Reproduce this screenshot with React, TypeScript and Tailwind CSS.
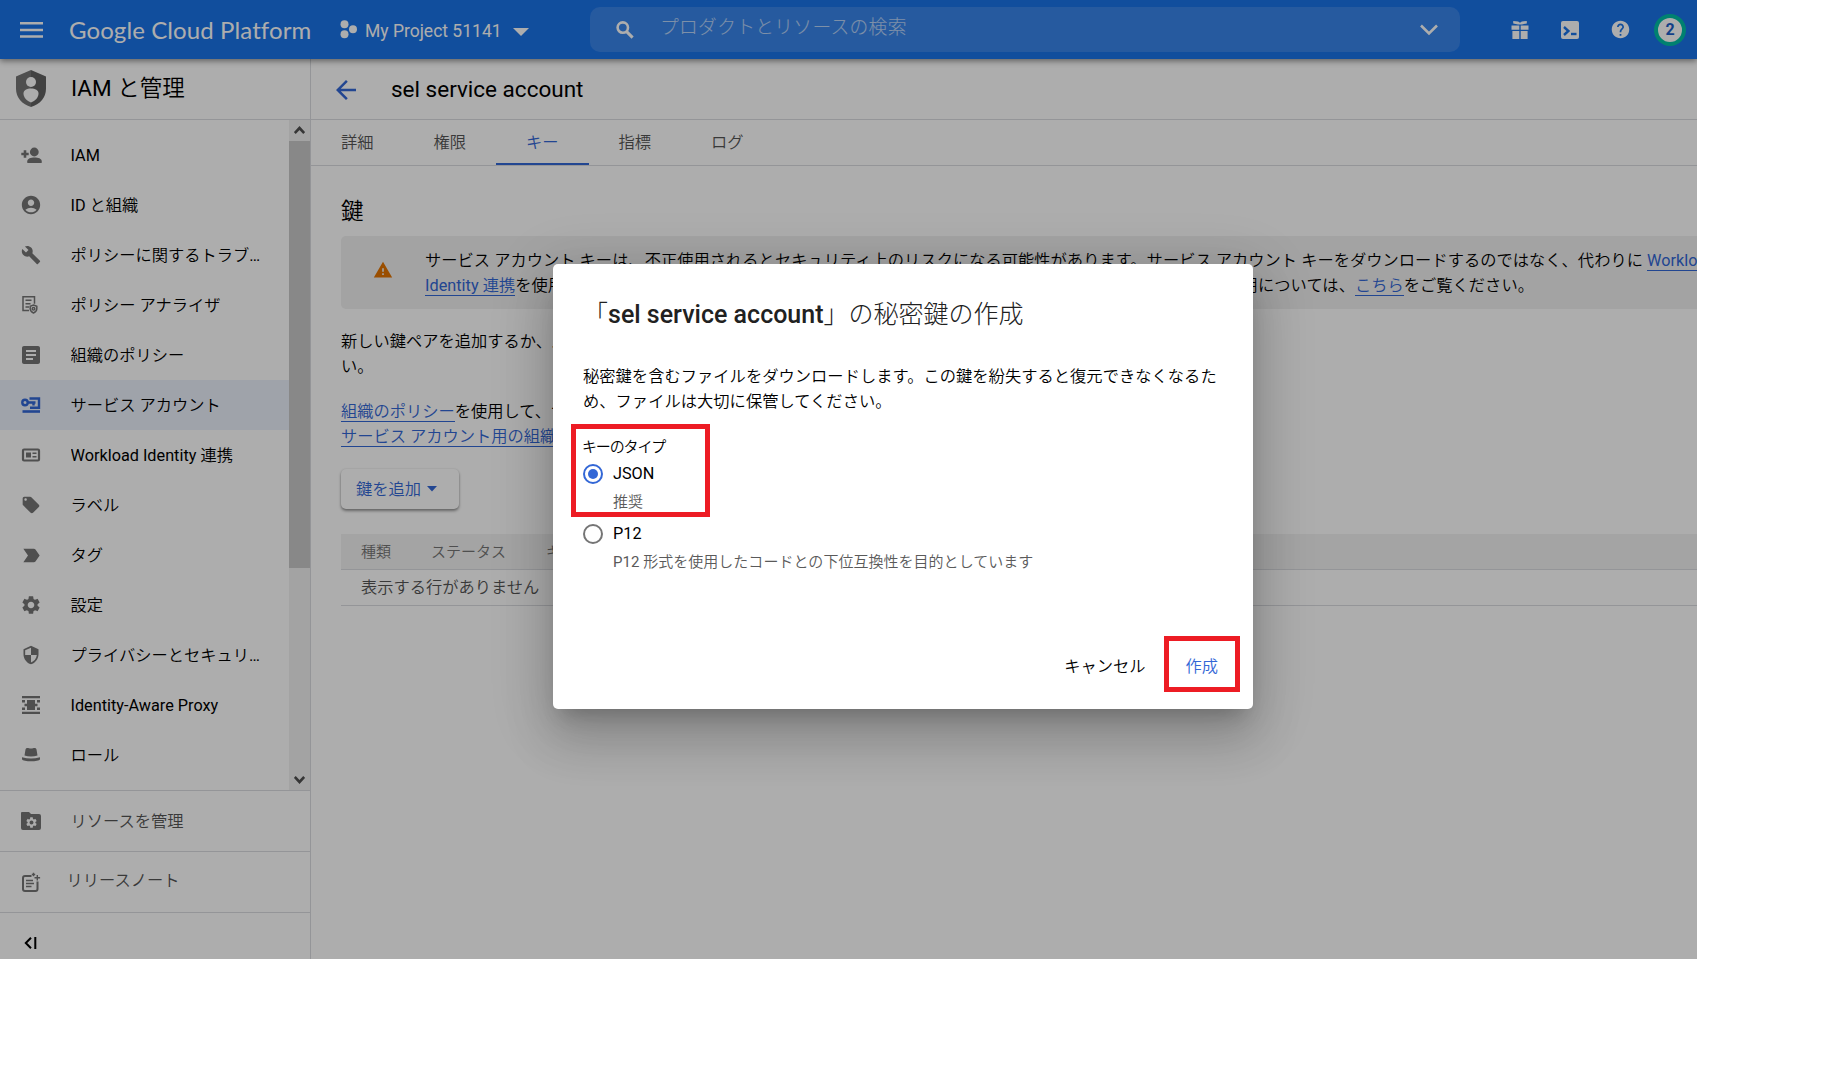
import type { ReactNode } from 'react'
import {
  MdAccountCircle,
  MdArrowBack,
  MdArticle,
  MdBuild,
  MdHelp,
  MdLabelImportant,
  MdLocalOffer,
  MdSecurity,
  MdSettings,
  MdWarning,
} from 'react-icons/md'

// ---- Icons that the icon set lacks ----

function MenuIcon() {
  return (
    <svg width="24" height="16" viewBox="0 0 24 16" fill="currentColor">
      <path d="M0 0h23v2.5H0zM0 6.7h23v2.5H0zM0 13.3h23v2.5H0z" />
    </svg>
  )
}

function ProjectIcon() {
  return (
    <svg width="18" height="19" viewBox="0 0 18 19" fill="currentColor">
      <circle cx="4.5" cy="4.3" r="4" />
      <circle cx="4.5" cy="14.3" r="4" />
      <circle cx="13" cy="9.3" r="4" />
    </svg>
  )
}

function SearchIcon() {
  return (
    <svg width="18" height="18" viewBox="0 0 18 18" fill="none" stroke="currentColor">
      <circle cx="6.8" cy="6.6" r="5.2" strokeWidth="2.6" />
      <path d="M10.6 10.6l6 6" strokeWidth="3" />
    </svg>
  )
}

function ChevronIcon() {
  return (
    <svg width="18" height="12" viewBox="0 0 18 12" fill="none" stroke="currentColor" strokeWidth="2.6">
      <path d="M1 1.5l8 8 8-8" />
    </svg>
  )
}

function GiftIcon() {
  return (
    <svg width="18" height="18" viewBox="0 0 18 18" fill="currentColor">
      <path d="M2.2 0l5 .6L9 1.8 10.8.6l5-.6v2.4L11 3.6H7L2.2 2.4z" />
      <path d="M.5 4.6h7.8v4.2H.5zM9.7 4.6h7.8v4.2H9.7zM1.4 10h6.9v8H1.4zM9.7 10h6.9v8H9.7z" />
    </svg>
  )
}

function ShellIcon() {
  return (
    <svg width="18" height="18" viewBox="0 0 18 18">
      <rect width="18" height="18" rx="2" fill="currentColor" />
      <path d="M3 6l4.4 4L3 14" fill="none" stroke="#1a73e8" strokeWidth="2.4" />
      <path d="M10 13h5.5" stroke="#1a73e8" strokeWidth="2.4" />
    </svg>
  )
}

function IamLogo() {
  return (
    <svg width="30" height="37" viewBox="0 0 30 37">
      <path d="M15 0L0 6.5V19c0 8.5 6.2 15.4 15 18z" fill="#757575" />
      <path d="M15 0l15 6.5V19c0 8.5-6.2 15.4-15 18z" fill="#616161" />
      <circle cx="15" cy="12" r="5" fill="#fff" />
      <path d="M7.5 23.5c0-3.3 3.3-5 7.5-5s7.5 1.7 7.5 5c0 4-3.3 7.4-7.5 9-4.2-1.6-7.5-5-7.5-9z" fill="#fff" />
    </svg>
  )
}

function AddPersonIcon() {
  return (
    <svg width="22" height="22" viewBox="0 0 22 22" fill="currentColor">
      <path d="M3.7 6.3h2.6v2.4h2.4v2.6H6.3v2.4H3.7v-2.4H1.300V8.7h2.4z" />
      <circle cx="14.3" cy="8" r="4.4" />
      <path d="M7.3 19v-1.8c0-2.6 3.5-3.7 7.2-3.7s7.2 1.1 7.2 3.7V19z" />
    </svg>
  )
}

function AnalyzerIcon() {
  return (
    <svg width="22" height="22" viewBox="0 0 22 22" fill="none" stroke="currentColor" strokeWidth="1.5">
      <path d="M9 16.5H3V2.7h11.5v7M5.5 6.3h6M5.5 9.7h5M5.5 13H9" />
      <path d="M13.5 11l3.3 1.2v2.6c0 1.9-1.3 3.3-3.3 4.2-2-.9-3.3-2.3-3.3-4.2v-2.6z" />
      <circle cx="13.5" cy="14.7" r="1.3" />
    </svg>
  )
}

function ServiceAccountIcon() {
  return (
    <svg width="22" height="22" viewBox="0 0 22 22" fill="none" stroke="currentColor">
      <circle cx="5" cy="8.5" r="2.7" strokeWidth="2.4" />
      <path d="M7.5 8.5h8M13.5 8.5v3" strokeWidth="2.4" />
      <path d="M9.5 4.5H19v9.3h-9" strokeWidth="2.4" />
      <path d="M2.5 17.5H20" strokeWidth="2.6" />
    </svg>
  )
}

function WorkloadIcon() {
  return (
    <svg width="22" height="22" viewBox="0 0 22 22" fill="none" stroke="currentColor">
      <rect x="3" y="5.5" width="16" height="11" rx="1" strokeWidth="2.2" />
      <path d="M6 8.5h5v5H6z" fill="currentColor" stroke="none" />
      <path d="M12.5 9.3h4M12.5 12.7h4" strokeWidth="1.5" />
    </svg>
  )
}

function ProxyIcon() {
  return (
    <svg width="22" height="22" viewBox="0 0 22 22" fill="currentColor">
      <path d="M2 2h18v2.2H2zM2 17.8h18V20H2zM7 6h8v10H7zM2 6h3v2.5H2zM17 6h3v2.5h-3zM2 13.5h3V16H2zM17 13.5h3V16h-3zM4.5 9.8h13v2.4h-13z" />
    </svg>
  )
}

function HatIcon() {
  return (
    <svg width="22" height="22" viewBox="0 0 22 22" fill="currentColor">
      <path d="M5.500 5.500c.5-1.500 2-1.800 3.500-1.200 1.300.4 2.700.4 4 0 1.500-.6 3-.3 3.500 1.200l1 6c-4 1.400-9 1.400-13 0z" />
      <path d="M2 13.200c6 1.700 12 1.700 18 0v2c-1 2.800-17 2.800-18 0z" />
    </svg>
  )
}

function ManageIcon() {
  return (
    <span className="relative flex">
      <svg width="22" height="20" viewBox="0 0 22 20" fill="currentColor">
        <path d="M2 1h7l2 2h8a2 2 0 012 2v12a2 2 0 01-2 2H3a2 2 0 01-2-2V2a1 1 0 011-1z" />
      </svg>
      <MdSettings className="absolute left-[4.5px] top-[4.5px] text-white" size={13} />
    </span>
  )
}

function NotesIcon() {
  return (
    <svg width="22" height="22" viewBox="0 0 22 22" fill="none" stroke="currentColor" strokeWidth="2">
      <path d="M11.5 4H5a2 2 0 00-2 2v11a2 2 0 002 2h10.5a2 2 0 002-2V9.5" />
      <path d="M6 8.500h7M6 11.500h8M6 14.500h5.500" strokeWidth="1.6" />
      <path d="M17.300 3v5.600M14.500 5.800h5.600M13.500.8v3.400M11.800 2.500h3.400" strokeWidth="1.4" />
    </svg>
  )
}

function CollapseIcon() {
  return (
    <svg width="13" height="12" viewBox="0 0 13 12" fill="none" stroke="#000" strokeWidth="2">
      <path d="M7 .8L1.8 6 7 11.2M11.3 0v12" />
    </svg>
  )
}

function ScrollArrow({ up }: { up?: boolean }) {
  return (
    <svg width="11" height="8" viewBox="0 0 11 8" fill="none" stroke="#505050" strokeWidth="2.6">
      <path d={up ? 'M.8 7l4.7-5 4.7 5' : 'M.8 1l4.7 5 4.7-5'} />
    </svg>
  )
}

// ---- Data ----

const navItems: { label: string; icon: ReactNode; active?: boolean }[] = [
  { label: 'IAM', icon: <AddPersonIcon /> },
  { label: 'ID と組織', icon: <MdAccountCircle size={22} /> },
  { label: 'ポリシーに関するトラブルシューティング', icon: <MdBuild size={20} /> },
  { label: 'ポリシー アナライザ', icon: <AnalyzerIcon /> },
  { label: '組織のポリシー', icon: <MdArticle size={24} /> },
  { label: 'サービス アカウント', icon: <ServiceAccountIcon />, active: true },
  { label: 'Workload Identity 連携', icon: <WorkloadIcon /> },
  { label: 'ラベル', icon: <MdLocalOffer size={20} /> },
  { label: 'タグ', icon: <MdLabelImportant size={23} /> },
  { label: '設定', icon: <MdSettings size={22} /> },
  { label: 'プライバシーとセキュリティ', icon: <MdSecurity size={20} /> },
  { label: 'Identity-Aware Proxy', icon: <ProxyIcon /> },
  { label: 'ロール', icon: <HatIcon /> },
]

const tabs = ['詳細', '権限', 'キー', '指標', 'ログ']

// ---- Parts ----

function Link({ children }: { children: ReactNode }) {
  return <a className="border-b border-[#3367d6] text-[#3367d6]">{children}</a>
}

function Header() {
  return (
    <header className="relative z-10 flex h-[59px] shrink-0 items-center bg-[#1a73e8] text-white shadow-[0_2px_6px_rgba(0,0,0,0.45)]">
      <div className="ml-5 w-[49px]">
        <MenuIcon />
      </div>
      <div className="w-[271px] whitespace-nowrap font-[Lato] text-[24px] leading-[30px] tracking-[0.1px]">
        Google Cloud Platform
      </div>
      <ProjectIcon />
      <span className="ml-[7px] w-[148px] whitespace-nowrap pt-[3px] text-[17.5px]">My Project 51141</span>
      <svg width="16" height="8" viewBox="0 0 16 8" fill="currentColor" className="mt-1">
        <path d="M0 0h16L8 8z" />
      </svg>
      <div className="ml-[61px] flex h-[45px] w-[870px] items-center rounded-[10px] bg-white/[0.13] pl-[26px] pr-[22px]">
        <SearchIcon />
        <span className="ml-[26px] flex-1 pb-1 font-[Roboto,'Noto_Sans_CJK_JP_Light','Noto_Sans_CJK_JP',sans-serif] text-[18.75px] tracking-[0.3px] text-white/65">
          プロダクトとリソースの検索
        </span>
        <ChevronIcon />
      </div>
      <div className="ml-[51px] flex items-center gap-8">
        <GiftIcon />
        <ShellIcon />
        <MdHelp size={21} className="-mx-[1.5px]" />
      </div>
      <div className="ml-[25px] flex size-8 items-center justify-center rounded-full border-4 border-[#00bfa5] bg-white text-[16px] font-bold text-[#1a5ec8]">
        2
      </div>
    </header>
  )
}

function Sidebar() {
  return (
    <nav className="flex w-[311px] shrink-0 flex-col border-r border-[#dadce0]">
      <div className="flex h-[61px] items-center border-b border-[#dadce0] pb-0.5 pl-4">
        <IamLogo />
        <h1 className="ml-[25px] text-[22.5px]">IAM と管理</h1>
      </div>
      <div className="flex h-[670px]">
        <ul className="w-[289px] pt-2.5">
          {navItems.map((item) => (
            <li key={item.label} className={`flex h-[50px] items-center ${item.active ? 'bg-[#ebf0fb]' : ''}`}>
              <span
                className={`flex w-[62px] shrink-0 justify-center ${item.active ? 'text-[#3367d6]' : 'text-[#757575]'}`}
              >
                {item.icon}
              </span>
              <span className="ml-[8.5px] w-[191.5px] truncate leading-[25px]">{item.label}</span>
            </li>
          ))}
        </ul>
        <div className="flex w-[21px] flex-col items-center justify-between bg-[#f1f1f1]">
          <div className="flex h-[21px] items-center pb-0.5">
            <ScrollArrow up />
          </div>
          <div className="h-[427px] w-full bg-[#c9c9c9]" />
          <div className="flex flex-1 items-end pb-[6px]">
            <ScrollArrow />
          </div>
        </div>
      </div>
      <div className="flex h-[61px] items-center border-t border-[#dadce0] text-[#757575]">
        <span className="flex w-[62px] justify-center">
          <ManageIcon />
        </span>
        <span className="ml-[8.5px] pt-0.5 text-[#555]">リソースを管理</span>
      </div>
      <div className="flex h-[61px] items-center border-t border-[#dadce0] text-[#757575]">
        <span className="flex w-[62px] justify-center pt-0.5">
          <NotesIcon />
        </span>
        <span className="ml-[4.5px] pb-0.5 text-[#555]">リリースノート</span>
      </div>
      <div className="flex-1 border-t border-[#dadce0] pl-6 pt-6">
        <CollapseIcon />
      </div>
    </nav>
  )
}

function Content() {
  return (
    <main className="flex min-w-0 flex-1 flex-col whitespace-nowrap">
      <div className="flex h-[61px] items-center border-b border-[#dadce0] pl-5">
        <MdArrowBack size={30} className="mt-px text-[#3367d6]" />
        <h2 className="ml-[30px] text-[22.5px]">sel service account</h2>
      </div>
      <div className="flex h-[46px] border-b border-[#dadce0]">
        {tabs.map((tab) => (
          <div
            key={tab}
            className={`flex w-[92.5px] items-center justify-center ${
              tab === 'キー' ? 'border-b-2 border-[#3367d6] pt-0.5 text-[#3367d6]' : 'text-[#555]'
            }`}
          >
            {tab}
          </div>
        ))}
      </div>
      <div className="pl-[30px] leading-[25px]">
        <h3 className="mt-[32px] text-[22.5px] leading-[26px]">鍵</h3>
        <div className="mt-3 flex h-[73px] items-center rounded-l-[5px] bg-[#f0f0f0] pl-[32px]">
          <MdWarning size={20} className="mb-[6px] shrink-0 text-[#e37400]" />
          <p className="ml-8 tracking-[0.025px]">
            サービス アカウント キーは、不正使用されるとセキュリティ上のリスクになる可能性があります。サービス アカウント キーをダウンロードするのではなく、代わりに{' '}
            <Link>Workload</Link>
            <br />
            <Link>Identity 連携</Link>
            を使用することをおすすめします。Google Cloud でのサービス アカウント キーの適切な管理及び使用については、
            <Link>こちら</Link>
            をご覧ください。
          </p>
        </div>
        <p className="mt-5">
          新しい鍵ペアを追加するか、既存の鍵ペアから公開鍵証明書をアップロードしてくださ
          <br />
          い。
        </p>
        <p className="mt-5">
          <Link>組織のポリシー</Link>
          を使用して、サービス アカウント キーの作成をブロックできます。
          <br />
          <Link>サービス アカウント用の組織ポリシーの設定の詳細</Link>
        </p>
        <button className="mt-5 flex h-10 w-[118px] items-center rounded-[5px] pl-[15px] text-[#3367d6] shadow-[0_2px_3px_rgba(0,0,0,0.4),0_0_2px_rgba(0,0,0,0.12)]">
          鍵を追加
          <svg width="10" height="6" viewBox="0 0 10 6" fill="currentColor" className="ml-[6px]">
            <path d="M0 0h10L5 5.5z" />
          </svg>
        </button>
        <div className="mt-[25px] flex h-9 items-center gap-10 border-b border-[#dadce0] bg-[#f2f2f2] pl-5 pt-0.5 text-[15px] text-[#757575]">
          <span>種類</span>
          <span>ステータス</span>
          <span>キー</span>
          <span>キーの作成日</span>
          <span>キーの有効期限</span>
        </div>
        <div className="flex h-9 items-center border-b border-[#dadce0] pl-5 text-[#555]">表示する行がありません</div>
      </div>
    </main>
  )
}

function Radio({ label, hint, checked }: { label: string; hint: string; checked?: boolean }) {
  return (
    <div className="flex h-[60px] gap-[10px]">
      <span
        className={`flex size-5 items-center justify-center rounded-full border-[2.5px] ${
          checked ? 'border-[#3367d6]' : 'border-[#757575]'
        }`}
      >
        {checked && <span className="size-[10px] rounded-full bg-[#3367d6]" />}
      </span>
      <div>
        <div className="leading-5">{label}</div>
        <div className="mt-2 text-[15px] leading-5 tracking-[0.03px] text-[#5a5a5a]">{hint}</div>
      </div>
    </div>
  )
}

function KeyDialog() {
  return (
    <div className="absolute left-[553px] top-[264px] z-30 flex h-[445px] w-[700px] flex-col whitespace-nowrap rounded-[5px] bg-white px-[30px] shadow-[0_14px_19px_-9px_rgba(0,0,0,0.2),0_30px_48px_4px_rgba(0,0,0,0.14),0_11px_58px_10px_rgba(0,0,0,0.12)]">
      <h2 className="mt-[35px] font-[Roboto,'Noto_Sans_CJK_JP_Light','Noto_Sans_CJK_JP',sans-serif] text-[25px] leading-8 text-[#212121]">
        「<span className="font-medium">sel service account</span>」の秘密鍵の作成
      </h2>
      <p className="mt-[33px] leading-[25px] tracking-[0.04px]">
        秘密鍵を含むファイルをダウンロードします。この鍵を紛失すると復元できなくなるた
        <br />
        め、ファイルは大切に保管してください。
      </p>
      <div className="-ml-px mt-[23px] text-[15px] leading-5 tracking-[-1.15px]">キーのタイプ</div>
      <div className="mt-[7px]">
        <Radio label="JSON" hint="推奨" checked />
        <Radio label="P12" hint="P12 形式を使用したコードとの下位互換性を目的としています" />
      </div>
      <div className="mt-[73px] flex justify-end gap-10 pr-[5px] leading-5">
        <button>キャンセル</button>
        <button className="text-[#3367d6]">作成</button>
      </div>
      {/* Highlight frames */}
      <div className="absolute left-[18px] top-[160px] h-[93px] w-[139px] border-[5px] border-[#ed1c24]" />
      <div className="absolute left-[611px] top-[372px] h-[56px] w-[76px] border-[5px] border-[#ed1c24]" />
    </div>
  )
}

export default function App() {
  return (
    <div className="h-[1080px] w-[1824px] bg-white">
      <div className="relative flex h-[959px] w-[1697px] flex-col overflow-hidden bg-white font-[Roboto,'Noto_Sans_CJK_JP_DemiLight','Noto_Sans_CJK_JP',sans-serif] text-[16.25px] leading-[20px] text-black">
        <Header />
        <div className="flex flex-1">
          <Sidebar />
          <Content />
        </div>
        <div className="absolute inset-0 z-20 bg-black/[0.32]" />
        <KeyDialog />
      </div>
    </div>
  )
}
